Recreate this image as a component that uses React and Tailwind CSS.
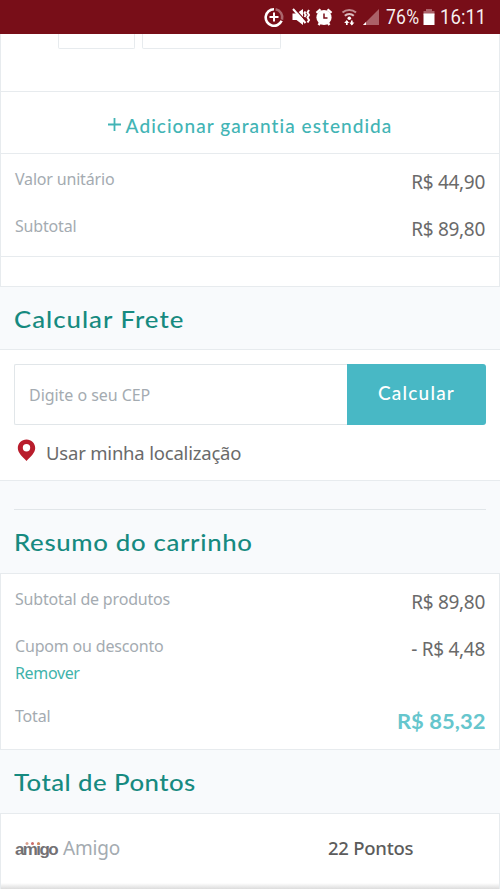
const StatusBar = () => (
  <header className="flex h-[34px] items-center bg-[#780e18] pl-[264px] font-[Roboto,sans-serif] text-[20px] text-white/95">
    <svg width="124" height="34" viewBox="264 0 124 34" fill="none" className="shrink-0">
      {/* data saver */}
      <path d="M274 9.2a8.3 8.3 0 1 0 7.6 11.6" stroke="#fff" strokeWidth="2.6" />
      <path d="M275.6 9.3a8.3 8.3 0 0 1 6.4 10.4" stroke="#ab666c" strokeWidth="2.6" />
      <path d="M274 12.5v9M269.5 17h9" stroke="#fff" strokeWidth="2" />
      {/* vibrate */}
      <path d="M292.5 13.5h4l6.5-4.5v16l-6.5-5h-4z" fill="#fff" />
      <path d="M295 9l10 11" stroke="#780e18" strokeWidth="1.2" />
      <path d="M293 9l12.500 14" stroke="#fff" strokeWidth="2" />
      <path d="M305.500 11.500l-1 1.500 1.200 2-1.200 2M309 10l-1.500 2.500 1.500 2.500-1.500 2.500 1.500 2.500-1.500 2.500" stroke="#fff" strokeWidth="2" />
      {/* alarm */}
      <circle cx="324" cy="17.5" r="7.6" fill="#fff" />
      <path d="M316.5 12.800l4-3.500M331.5 12.800l-4-3.500M318.5 25l2-2.500M329.5 25l-2-2.500" stroke="#fff" strokeWidth="2.4" />
      <path d="M324 13.500v4.500h3.500" stroke="#780e18" strokeWidth="1.5" />
      {/* wifi */}
      <path d="M342.5 12.500a10 10 0 0 1 13.500 0" stroke="#c08a8f" strokeWidth="2" />
      <path d="M344.8 15.700a6.500 6.500 0 0 1 9 0" stroke="#dcbcbf" strokeWidth="2" />
      <circle cx="349.3" cy="18.3" r="1.8" fill="#fff" />
      <path d="M346.8 25v-4M351.8 20.500v4" stroke="#fff" strokeWidth="1.7" />
      <path d="M344.2 23l2.600-3 2.400 3zM349.4 22.500l2.400 3 2.600-3z" fill="#fff" />
      {/* signal */}
      <path d="M379 9v16h-16z" fill="#ab6168" />
      <path d="M366 22v3h-3z" fill="#fff" />
    </svg>
    <span className="-ml-0.5 w-[33px] shrink-0 origin-left scale-x-[0.88] scale-y-[1.03] tracking-[0.2px]">76%</span>
    <svg width="12" height="34" viewBox="0 0 12 34" className="ml-1 shrink-0">
      <path d="M3 9h6v2h2.5v4H.5v-4H3z" fill="#ab6168" />
      <path d="M.5 13.5h11V25H.5z" fill="#fff" />
    </svg>
    <span className="ml-[5px] origin-left scale-x-[0.93] scale-y-[1.03]">16:11</span>
  </header>
);

const Row = ({ label, value, className }) => (
  <div className={`flex justify-between ${className}`}>
    <span className="text-base leading-6 tracking-[-0.18px] text-[#a4abb1]">{label}</span>
    <span className="pt-[3px] text-[19px] leading-6 tracking-[-0.3px] text-[#6a6a6a]">{value}</span>
  </div>
);

const Title = ({ children, className }) => (
  <h2 className={`px-3.5 pt-4 font-[Lato,sans-serif] text-[23px] leading-8 font-medium text-[#168a80] ${className}`}>
    <span className="inline-block origin-left scale-x-[1.12]">{children}</span>
  </h2>
);

const App = () => (
  <div className="flex h-[889px] w-[500px] flex-col overflow-hidden bg-[#f8fafc] font-['Noto_Sans',sans-serif]">
    <StatusBar />

    {/* product */}
    <section className="h-[253px] border-x border-b border-[#e7ebee] bg-white">
      <div className="flex h-[58px] gap-[7px] border-b border-[#e7ebee] pl-[57px]">
        <div className="h-[15px] w-[77px] rounded-b-[2px] border border-t-0 border-[#e7ebee]" />
        <div className="h-[15px] w-[139px] rounded-b-[2px] border border-t-0 border-[#e7ebee]" />
      </div>
      <button className="flex h-[62px] w-full items-center justify-center border-b border-[#e7ebee] pt-[7px] font-[Lato,sans-serif] text-[19px] font-medium text-[#42b4b5]">
        <svg width="13" height="13" viewBox="0 0 13 13" className="mr-[5px] mb-1">
          <path d="M6.5 0v13M0 6.5h13" stroke="currentColor" strokeWidth="1.8" />
        </svg>
        <span className="tracking-[1.05px]">Adicionar garantia estendida</span>
      </button>
      <div className="h-[103px] border-b border-[#e7ebee] px-3.5 pt-[13px]">
        <Row label="Valor unitário" value="R$ 44,90" className="h-[47px]" />
        <Row label="Subtotal" value="R$ 89,80" />
      </div>
    </section>

    {/* shipping */}
    <Title className="h-[62px] tracking-[0.9px]">Calcular Frete</Title>
    <section className="h-[132px] border-y border-[#e7ebee] bg-white px-3.5 pt-3.5">
      <form className="flex h-[61px]" onSubmit={(e) => e.preventDefault()}>
        <input
          placeholder="Digite o seu CEP"
          className="min-w-0 flex-1 rounded-l-[2px] border border-r-0 border-[#e1e6e9] px-3.5 text-base tracking-[-0.05px] text-[#666] outline-none placeholder:text-[#a4abb1]"
        />
        <button className="w-[139px] rounded-r-[3px] bg-[#48b8c5] pb-0.5 font-[Lato,sans-serif] text-[19px] font-medium tracking-[1.2px] text-white">
          Calcular
        </button>
      </form>
      <div className="flex pt-3.5 pl-[3px]">
        <svg width="19" height="23" viewBox="0 0 19 23">
          <path
            d="M9.5 0.5C4.5 0.5.8 4.2.8 9c0 5 4.5 8.5 8.7 13 4.2-4.5 8.7-8 8.7-13C18.2 4.2 14.5.5 9.5.5zm0 4.6a3.7 3.7 0 1 1 0 7.400 3.700 3.700 0 0 1 0-7.400z"
            fill="#b91d2c"
          />
        </svg>
        <span className="ml-[10px] text-[18.5px] leading-7 tracking-[-0.2px] text-[#6a6a6a]">Usar minha localização</span>
      </div>
    </section>

    {/* summary */}
    <hr className="mx-3.5 mt-7 border-[#e1e6e9]" />
    <Title className="h-[63px] tracking-[0.6px]">Resumo do carrinho</Title>
    <section className="h-[177px] border border-[#e7ebee] bg-white px-3.5 pt-[13px]">
      <Row label="Subtotal de produtos" value="R$ 89,80" className="h-[47px]" />
      <Row label="Cupom ou desconto" value="- R$ 4,48" className="h-[27px]" />
      <button className="block h-[43px] pb-[19px] text-base leading-6 tracking-[-0.35px] text-[#3fb3ab]">Remover</button>
      <div className="flex justify-between">
        <span className="text-base leading-6 tracking-[-0.2px] text-[#a4abb1]">Total</span>
        <span className="origin-right scale-x-[1.1] pt-[5px] font-[Lato,sans-serif] text-[20px] leading-6 font-bold text-[#66c6cd]">
          R$ 85,32
        </span>
      </div>
    </section>

    {/* points */}
    <Title className="h-[63px] tracking-[0.4px]">Total de Pontos</Title>
    <section className="flex h-[76px] flex-col justify-between border-x border-t border-[#e7ebee] bg-white">
      <div className="flex items-center pt-[20px] pl-3.5">
        <div className="relative w-[43px] pt-[3px] font-['Liberation_Sans',sans-serif] text-[17px] leading-6 font-bold tracking-[-1.6px] text-[#737174]">
          amigo
          <svg width="16" height="5" viewBox="0 0 16 5" className="absolute top-1.5 left-[10px]">
            <circle cx="2" cy="2.5" r="1.5" fill="#d9a08d" />
            <circle cx="7.5" cy="2.5" r="1.5" fill="#c96a6b" />
            <circle cx="13.5" cy="2.5" r="1.5" fill="#d58a62" />
          </svg>
        </div>
        <span className="ml-[5px] w-[265px] text-[19px] leading-7 tracking-[-0.2px] text-[#a4abb1]">Amigo</span>
        <span className="text-[18.5px] leading-7 font-medium tracking-[-0.25px] text-[#5c5c5c]">22 Pontos</span>
      </div>
      <div className="h-[6px] bg-linear-to-b from-white to-[#dcdcdc]" />
    </section>
  </div>
);

export default App;
